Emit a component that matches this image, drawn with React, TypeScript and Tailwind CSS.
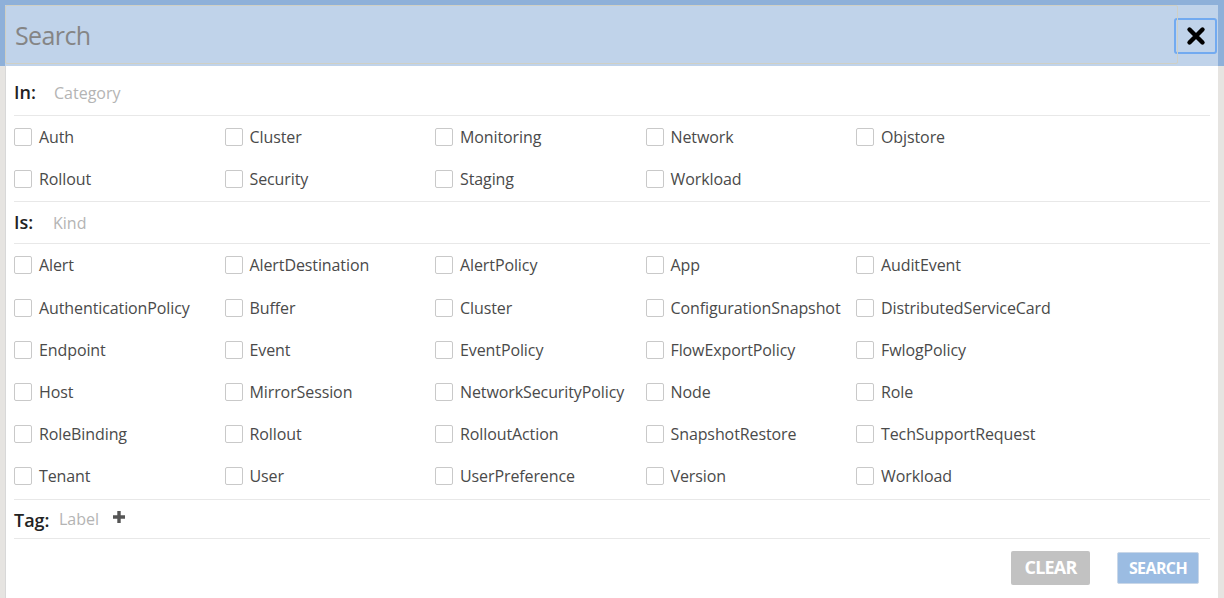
import React from "react";

const categories = ["Auth", "Cluster", "Monitoring", "Network", "Objstore", "Rollout", "Security", "Staging", "Workload"];
const kinds = [
  "Alert", "AlertDestination", "AlertPolicy", "App", "AuditEvent",
  "AuthenticationPolicy", "Buffer", "Cluster", "ConfigurationSnapshot", "DistributedServiceCard",
  "Endpoint", "Event", "EventPolicy", "FlowExportPolicy", "FwlogPolicy",
  "Host", "MirrorSession", "NetworkSecurityPolicy", "Node", "Role",
  "RoleBinding", "Rollout", "RolloutAction", "SnapshotRestore", "TechSupportRequest",
  "Tenant", "User", "UserPreference", "Version", "Workload",
];

function Item({ label }: { label: string }) {
  return (
    <div className="flex items-center h-[42.2px] gap-[7px]">
      <span className="w-[18px] h-[18px] border border-[#c9c9c9] rounded-[2px] bg-white shrink-0" />
      <span className="text-[16px] text-[#4a4a4a] whitespace-nowrap tracking-[-0.1px]">{label}</span>
    </div>
  );
}

export default function App() {
  return (
    <div
      className="relative w-[1224px] h-[598px] overflow-hidden bg-[#e6e4e1]"
      style={{ fontFamily: '"Open Sans", "Noto Sans", sans-serif' }}
    >
      <div className="h-[66px] bg-[#8eb0d9]" />
      <div className="absolute left-[5px] top-[5px] w-[1213px] h-[600px] flex flex-col">
        <div className="h-[61px] bg-[#c0d3ea] flex items-center relative">
          <div className="absolute left-0 top-0 w-[1173px] h-[59px] border border-[#cfcfc4] rounded-[2px]" />
          <span className="ml-[10px] text-[25px] text-[#858585] tracking-[-0.6px]">Search</span>
          <div className="ml-auto mr-[1px] w-[43px] h-[36px] border-[2px] border-[#72aaf0] rounded-[3px] flex items-center justify-center">
            <svg width="20" height="20" viewBox="0 0 20 20">
              <path d="M3.5 3.5 L16.5 16.5 M16.5 3.5 L3.5 16.5" stroke="#000" strokeWidth="4.4" strokeLinecap="round" />
            </svg>
          </div>
        </div>
        <div className="flex-1 bg-white px-[8px] border-l border-[#d8d8d8]">
          <div className="h-[50px] flex items-center border-b border-[#e8e8e8] pt-[4px]">
            <span className="text-[18px] font-semibold text-[#222] w-[40px]">In:</span>
            <span className="text-[16px] text-[#b4b4b4]">Category</span>
          </div>
          <div className="grid grid-cols-[repeat(5,210.5px)] pb-[1px] border-b border-[#e8e8e8]">
            {categories.map((c) => <Item key={c} label={c} />)}
          </div>
          <div className="h-[42px] flex items-center border-b border-[#e8e8e8]">
            <span className="text-[18px] font-semibold text-[#222] w-[39px]">Is:</span>
            <span className="text-[16px] text-[#b4b4b4]">Kind</span>
          </div>
          <div className="grid grid-cols-[repeat(5,210.5px)] pb-[1px] border-b border-[#e8e8e8]">
            {kinds.map((c, i) => <Item key={c + i} label={c} />)}
          </div>
          <div className="h-[39px] flex items-center border-b border-[#e8e8e8]">
            <span className="text-[18px] font-semibold text-[#222] w-[45px] mt-[4px]">Tag:</span>
            <span className="text-[16px] text-[#b4b4b4]">Label</span>
            <svg className="ml-[12px] mb-[4px]" width="16" height="16" viewBox="0 0 16 16">
              <path d="M8 2 V14 M2 8 H14" stroke="#555" strokeWidth="3.4" />
            </svg>
          </div>
          <div className="flex justify-end items-center pt-[12px] pr-[11px] gap-[27px]">
            <button className="w-[79px] h-[34px] bg-[#c2c2c2] rounded-[2px] text-white font-bold text-[18px] tracking-[-0.8px]">CLEAR</button>
            <button className="w-[82px] h-[32px] bg-[#9bbce2] border border-[#c9d7e8] rounded-[2px] text-white font-bold text-[16px] tracking-[-0.6px]">SEARCH</button>
          </div>
        </div>
      </div>
    </div>
  );
}
